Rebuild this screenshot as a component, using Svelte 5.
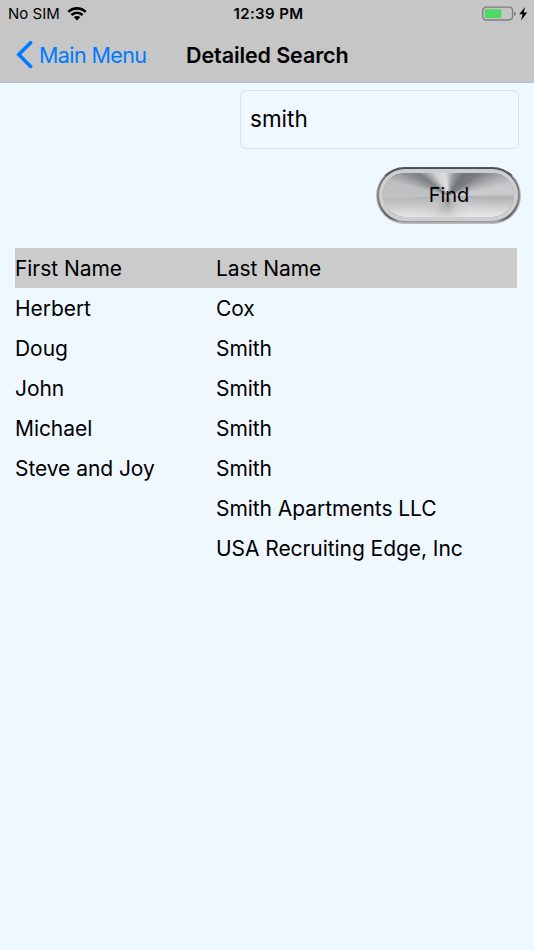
<script>
  let query = 'smith';

  const contacts = [
    { first: 'Herbert', last: 'Cox' },
    { first: 'Doug', last: 'Smith' },
    { first: 'John', last: 'Smith' },
    { first: 'Michael', last: 'Smith' },
    { first: 'Steve and Joy', last: 'Smith' },
    { first: '', last: 'Smith Apartments LLC' },
    { first: '', last: 'USA Recruiting Edge, Inc' }
  ];
</script>

<div class="screen">
  <header>
    <div class="status-bar">
      <div class="carrier">
        <span>No SIM</span>
        <svg width="20" height="14" viewBox="0 0 20 14">
          <g fill="none" stroke="#000" stroke-width="2.6">
            <path d="M1.3 4.9C6.2.2 13.8.2 18.7 4.9" />
            <path d="M4.4 8C7.6 5 12.4 5 15.6 8" />
          </g>
          <path d="M10 13.4L6.7 10.1C8.7 8.5 11.3 8.5 13.3 10.1Z" />
        </svg>
      </div>
      <div class="time">12:39 PM</div>
      <div class="battery">
        <svg width="46" height="16" viewBox="0 0 46 16">
          <rect x="0.7" y="1.2" width="29.8" height="12.8" rx="3.4" fill="none" stroke="#7d7d7d" stroke-width="1.3" />
          <rect x="2.7" y="3.2" width="16.6" height="8.9" rx="1" fill="#4cd964" />
          <path d="M32 5.4C34.4 6.4 34.4 9 32 10Z" fill="#7d7d7d" />
          <path d="M43 .9L37.2 8.3H40.6L39 14.4L45.2 6.4H41.8Z" />
        </svg>
      </div>
    </div>
    <nav>
      <button class="back">
        <svg width="17" height="28" viewBox="0 0 17 28">
          <path d="M14.6 1.8L2.8 13.6L14.6 25.4" fill="none" stroke="#007aff" stroke-width="3.6" stroke-linecap="round" />
        </svg>
        <span>Main Menu</span>
      </button>
      <h1>Detailed Search</h1>
    </nav>
  </header>

  <main>
    <div class="search">
      <input type="text" bind:value={query} />
      <button class="find">
        <span class="face">Find</span>
      </button>
    </div>

    <div class="results">
      <div class="row heading">
        <span>First Name</span>
        <span>Last Name</span>
      </div>
      {#each contacts as contact}
        <div class="row">
          <span>{contact.first}</span>
          <span>{contact.last}</span>
        </div>
      {/each}
    </div>
  </main>
</div>

<style>
  :global(body) {
    margin: 0;
    background: #eff7ff;
  }

  .screen {
    min-height: 950px;
    background: #eff7ff;
    color: #000;
    font-family: Inter, "Liberation Sans", sans-serif;
  }

  header {
    box-sizing: border-box;
    height: 83px;
    background: #c6c6c6;
    border-bottom: 1px solid #bcc0c4;
  }

  .status-bar {
    display: grid;
    grid-template-columns: 1fr auto 1fr;
    align-items: center;
    height: 27px;
    padding: 0 5px 0 8px;
    font-size: 15px;
  }

  .carrier {
    display: flex;
    align-items: center;
    gap: 7px;
  }

  .time {
    font-weight: 600;
    letter-spacing: 0.4px;
  }

  .battery {
    display: flex;
    justify-content: flex-end;
    padding-right: 1px;
  }

  .status-bar svg {
    display: block;
  }

  nav {
    display: flex;
    align-items: center;
    height: 55px;
    padding-left: 16px;
  }

  button {
    margin: 0;
    padding: 0;
    border: none;
    background: none;
    color: #000;
    font-family: inherit;
    cursor: pointer;
  }

  .back {
    display: flex;
    align-items: center;
    gap: 6px;
    width: 170px;
    color: #007aff;
    font-size: 21.5px;
    letter-spacing: -0.6px;
    white-space: nowrap;
  }

  h1 {
    margin: 0;
    font-size: 21.5px;
    font-weight: 600;
    letter-spacing: -0.1px;
    white-space: nowrap;
  }

  .search {
    display: flex;
    flex-direction: column;
    align-items: flex-end;
    padding: 7px 15px 0 0;
  }

  input {
    box-sizing: border-box;
    width: 279px;
    height: 59px;
    padding: 0 9px 2px;
    border: 1px solid #dae1e9;
    border-radius: 6px;
    background: transparent;
    color: #000;
    font-family: inherit;
    font-size: 22.5px;
    outline: none;
  }

  .find {
    box-sizing: border-box;
    width: 145px;
    height: 57px;
    margin: 18px -2px 0 0;
    padding: 1px 2px 2px;
    border: 1px solid #b9bcc0;
    border-top-color: #55585c;
    border-radius: 29px;
    background: linear-gradient(#4a4c50, #858789 50%, #5d5f62 92%, #b5b6b8);
  }

  .face {
    display: flex;
    align-items: center;
    justify-content: center;
    box-sizing: border-box;
    height: 100%;
    padding: 0 0 1px 1px;
    border: 4px solid #cdced0;
    border-radius: 26px;
    background:
      linear-gradient(transparent 50%, rgba(255, 255, 255, 0.03) 51%, rgba(255, 255, 255, 0.7)) padding-box,
      conic-gradient(from 0deg at 50% 52%, #c2c3c5, #97999c 14deg, #727579 35deg, #797c80 54deg, #a4a5a8 68deg, #c9cacc 80deg, #c9cacb 88deg, #a9aaac 92deg, #b5b6b7 120deg, #a3a4a6 150deg, #797b7f 180deg, #85878a 205deg, #a9aaac 235deg, #adaeb0 266deg, #bfc0c2 270deg, #bebfc1 284deg, #929497 296deg, #7b7e82 306deg, #a1a3a6 316deg, #d2d3d4 330deg, #dcddde 352deg, #c2c3c5) padding-box;
    font-size: 20px;
  }

  .results {
    margin: 24px 17px 0 15px;
    font-size: 21px;
    letter-spacing: -0.06px;
  }

  .row {
    display: grid;
    grid-template-columns: 201px 1fr;
    align-items: center;
    height: 40px;
    white-space: nowrap;
  }

  .heading {
    background: #cbcbcb;
  }
</style>
